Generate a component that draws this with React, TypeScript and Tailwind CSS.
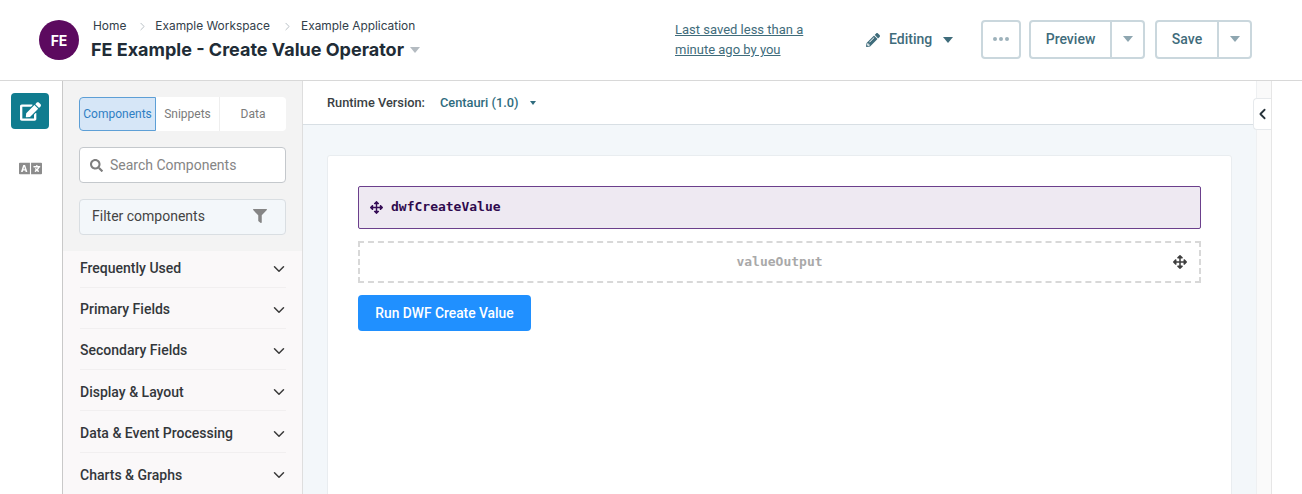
import React from 'react'
import { FaArrowsAlt, FaEdit, FaFilter, FaLanguage, FaPencilAlt, FaSearch } from 'react-icons/fa'
import { ChevronDown, ChevronLeft, ChevronRight } from 'lucide-react'

const categories = [
	'Frequently Used',
	'Primary Fields',
	'Secondary Fields',
	'Display & Layout',
	'Data & Event Processing',
	'Charts & Graphs',
]

const Caret = ({ className }: { className: string }) => (
	<span className={`w-0 h-0 border-x-[5px] border-x-transparent border-t-[6px] ${className}`} />
)

const Header = () => (
	<header className="h-[81px] shrink-0 border-b border-[#d8d8d8] flex items-center pl-[39px] bg-white">
		<div className="w-10 h-10 rounded-full bg-[#5c0a5f] text-white text-[14px] font-bold flex items-center justify-center font-['Inter',sans-serif]">
			FE
		</div>
		<div className="ml-3 w-[584px] font-['Inter',sans-serif] -mt-[1px]">
			<div className="flex items-center text-[11.9px] h-[17px] pt-[1px] text-[#33404a] pl-[2px]">
				<span>Home</span>
				<ChevronRight className="ml-[10px] mr-[6px] text-[#a9b1b8]" size={13} strokeWidth={1.5} />
				<span>Example Workspace</span>
				<ChevronRight className="ml-[11px] mr-[7px] text-[#a9b1b8]" size={13} strokeWidth={1.5} />
				<span>Example Application</span>
			</div>
			<div className="flex items-center mt-[4px]">
				<span className="text-[18px] leading-6 font-bold text-[#212c36]">FE Example - Create Value Operator</span>
				<Caret className="ml-[6px] border-t-[#b4bbc1]" />
			</div>
		</div>
		<div className="w-[191px] font-['Roboto',sans-serif] text-[13px] leading-[20px] text-[#3f6c7b] underline">
			Last saved less than a
			<br />
			minute ago by you
		</div>
		<div className="w-[115px] flex items-center text-[#3f6c7b] font-['Roboto',sans-serif] text-[14px] font-medium -mt-[1px]">
			<FaPencilAlt size={14} />
			<span className="ml-[9px]">Editing</span>
			<Caret className="ml-[11px] border-t-[#3f6c7b]" />
		</div>
		<div className="flex items-center font-['Roboto',sans-serif] text-[14px] font-medium text-[#3f6c7b] -mt-[2px]">
			<button className="w-[40px] h-[39px] border-2 border-[#cad7dd] rounded-[4px] flex items-center justify-center gap-[2px]">
				<span className="w-[4px] h-[4px] rounded-full bg-[#9db2bb]" />
				<span className="w-[4px] h-[4px] rounded-full bg-[#9db2bb]" />
				<span className="w-[4px] h-[4px] rounded-full bg-[#9db2bb]" />
			</button>
			<div className="ml-2 w-[116px] h-[39px] border-2 border-[#cad7dd] rounded-[4px] flex">
				<span className="w-[79px] flex items-center justify-center border-r-2 border-[#cad7dd] box-content">Preview</span>
				<span className="flex-1 flex items-center justify-center">
					<Caret className="border-t-[#8ea6b0]" />
				</span>
			</div>
			<div className="ml-[10px] w-[97px] h-[39px] border-2 border-[#cad7dd] rounded-[4px] flex">
				<span className="w-[60px] flex items-center justify-center border-r-2 border-[#cad7dd] box-content">Save</span>
				<span className="flex-1 flex items-center justify-center">
					<Caret className="border-t-[#8ea6b0]" />
				</span>
			</div>
		</div>
	</header>
)

const Rail = () => (
	<div className="w-[63px] shrink-0 border-r border-[#c9c9c9] bg-white flex flex-col items-center pt-3">
		<div className="w-[38px] h-[36px] rounded-[4px] bg-[#107c8f] flex items-center justify-center text-white -ml-[2px]">
			<FaEdit size={21} />
		</div>
		<FaLanguage className="mt-[28px] -ml-[2px] text-[#8c8c8c]" size={23} />
	</div>
)

const Panel = () => (
	<aside className="w-[240px] shrink-0 flex flex-col bg-[#f3f3f3] font-['Roboto',sans-serif] border-r border-[#dedede]">
		<div className="h-[170px] shrink-0 px-4 pt-4">
			<div className="flex h-[34px] bg-white rounded-[4px] text-[12px] text-[#7b7b7b] w-[207px]">
				<span className="w-[77px] flex items-center justify-center bg-[#d6e6f7] border border-[#5d9fd6] rounded-l-[4px] text-[#2f7fc4]">Components</span>
				<span className="w-[64px] flex items-center justify-center border-r border-[#eeeeee]">Snippets</span>
				<span className="flex-1 flex items-center justify-center">Data</span>
			</div>
			<div className="mt-[16px] flex items-center h-[36px] w-[207px] bg-white border border-[#c4c8cc] rounded-[4px] pl-[10px] text-[14px] text-[#858585]">
				<FaSearch size={13} className="text-[#7e7e7e]" />
				<span className="ml-[7px]">Search Components</span>
			</div>
			<div className="mt-[16px] flex items-center justify-between h-[36px] w-[207px] bg-[#f3f7fa] border border-[#d9dee2] rounded-[4px] pl-[12px] pr-[18px] pb-[2px] text-[14px] text-[#444444]">
				<span>Filter components</span>
				<FaFilter size={14} className="text-[#858585]" />
			</div>
		</div>
		<ul className="flex-1 bg-[#faf8f9] pl-[17px] pr-[16px]">
			{categories.map((name, key) => (
				<li
					key={key}
					className="h-[41.3px] pt-[4px] first:h-[36.5px] first:pt-0 last:border-b-0 flex items-center justify-between border-b border-[#f1eff0] text-[14px] font-medium text-[#33373b]"
				>
					<span>{name}</span>
					<ChevronDown size={18} className="text-[#3a3a3a] -mr-[2px]" />
				</li>
			))}
		</ul>
	</aside>
)

const Canvas = () => (
	<main className="flex-1 flex flex-col min-w-0 bg-white">
		<div className="h-[44px] shrink-0 border-b border-[#d8dfe4] flex items-center pl-6 pt-[1px] font-['Roboto',sans-serif] text-[12.8px]">
			<span className="font-medium text-[#3a3f44]">Runtime Version:</span>
			<span className="ml-[15px] text-[#2f6c7e] font-medium">Centauri (1.0)</span>
			<span className="ml-[11px] w-0 h-0 border-x-[3.5px] border-x-transparent border-t-[4px] border-t-[#2f6c7e]" />
		</div>
		<div className="flex-1 bg-[#f3f7fa] pt-[30px] pl-6 pr-[24px]">
			<div className="h-[400px] bg-white border border-[#e9edf0] rounded-[3px] pt-[30px] px-[30px]">
				<div className="h-[43px] flex items-center pl-[11px] pb-[1px] bg-[#eee9f2] border border-[#6b3f8c] rounded-[2px]">
					<FaArrowsAlt size={13} className="text-[#350c56]" />
					<span className="ml-[8px] font-['DejaVu_Sans_Mono',monospace] font-bold text-[13px] text-[#2e0a4e]">dwfCreateValue</span>
				</div>
				<div className="mt-3 h-[42px] flex items-center justify-center relative border-2 border-dashed border-[#d8d8d8]">
					<span className="font-['DejaVu_Sans_Mono',monospace] font-bold text-[13px] text-[#a9a9a9]">valueOutput</span>
					<FaArrowsAlt size={14} className="absolute right-[12px] text-[#3e3e3e]" />
				</div>
				<button className="mt-3 w-[173px] h-[36px] rounded-[4px] bg-[#2090ff] text-white text-[13.8px] font-medium font-['Roboto',sans-serif]">
					Run DWF Create Value
				</button>
			</div>
		</div>
	</main>
)

const App = () => {
	return (
		<div className="w-[1302px] h-[494px] overflow-hidden flex flex-col bg-white relative">
			<Header />
			<div className="flex-1 flex min-h-0">
				<Rail />
				<Panel />
				<Canvas />
				<div className="w-[16px] shrink-0 bg-[#fafafa] border-l border-[#eef0f2] border-r border-r-[#e6e6e6]" />
				<div className="w-[30px] shrink-0 bg-white" />
			</div>
			<div className="absolute left-[1253px] top-[98px] w-[18px] h-[32px] bg-white rounded-l-[4px] border border-r-0 border-[#e6e9ec] flex items-center justify-center">
				<ChevronLeft size={18} strokeWidth={2.5} className="text-[#26323a]" />
			</div>
		</div>
	)
}

export default App
